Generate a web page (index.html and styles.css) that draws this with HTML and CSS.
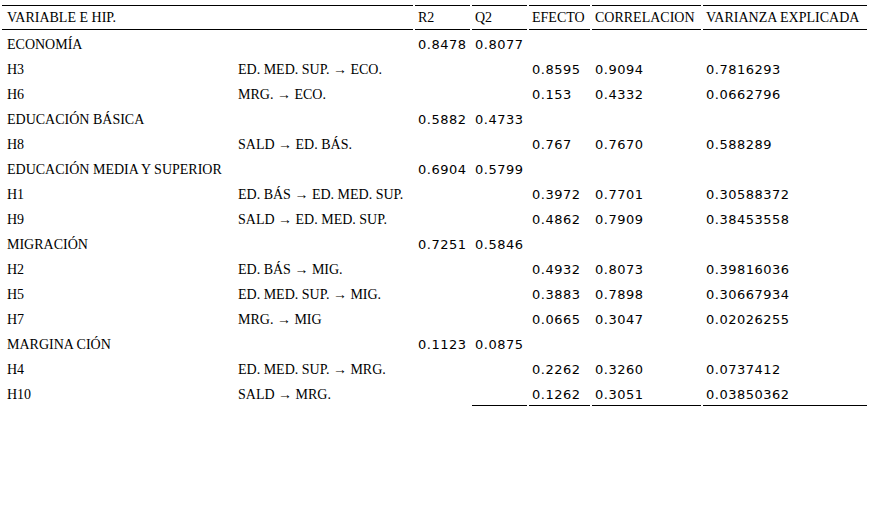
FILE: index.html
```html
<!DOCTYPE html>
<html lang="es">
<head>
<meta charset="utf-8">
<title>Tabla</title>
<link rel="stylesheet" href="styles.css">
</head>
<body>
<table class="tbl">
  <colgroup>
    <col class="c-var"><col class="c-rel"><col class="c-r2"><col class="c-q2"><col class="c-ef"><col class="c-co"><col class="c-va">
  </colgroup>
  <thead>
    <tr>
      <th colspan="2" class="first">VARIABLE E HIP.</th>
      <th>R2</th><th>Q2</th><th>EFECTO</th><th>CORRELACION</th><th>VARIANZA EXPLICADA</th>
    </tr>
  </thead>
  <tbody>
    <tr><td class="first">ECONOMÍA</td><td></td><td class="num">0.8478</td><td class="num">0.8077</td><td></td><td></td><td></td></tr>
    <tr><td class="first">H3</td><td>ED. MED. SUP. → ECO.</td><td></td><td></td><td class="num">0.8595</td><td class="num">0.9094</td><td class="num">0.7816293</td></tr>
    <tr><td class="first">H6</td><td>MRG. → ECO.</td><td></td><td></td><td class="num">0.153</td><td class="num">0.4332</td><td class="num">0.0662796</td></tr>
    <tr><td class="first">EDUCACIÓN BÁSICA</td><td></td><td class="num">0.5882</td><td class="num">0.4733</td><td></td><td></td><td></td></tr>
    <tr><td class="first">H8</td><td>SALD → ED. BÁS.</td><td></td><td></td><td class="num">0.767</td><td class="num">0.7670</td><td class="num">0.588289</td></tr>
    <tr><td class="first">EDUCACIÓN MEDIA Y SUPERIOR</td><td></td><td class="num">0.6904</td><td class="num">0.5799</td><td></td><td></td><td></td></tr>
    <tr><td class="first">H1</td><td>ED. BÁS → ED. MED. SUP.</td><td></td><td></td><td class="num">0.3972</td><td class="num">0.7701</td><td class="num">0.30588372</td></tr>
    <tr><td class="first">H9</td><td>SALD → ED. MED. SUP.</td><td></td><td></td><td class="num">0.4862</td><td class="num">0.7909</td><td class="num">0.38453558</td></tr>
    <tr><td class="first">MIGRACIÓN</td><td></td><td class="num">0.7251</td><td class="num">0.5846</td><td></td><td></td><td></td></tr>
    <tr><td class="first">H2</td><td>ED. BÁS → MIG.</td><td></td><td></td><td class="num">0.4932</td><td class="num">0.8073</td><td class="num">0.39816036</td></tr>
    <tr><td class="first">H5</td><td>ED. MED. SUP. → MIG.</td><td></td><td></td><td class="num">0.3883</td><td class="num">0.7898</td><td class="num">0.30667934</td></tr>
    <tr><td class="first">H7</td><td>MRG. → MIG</td><td></td><td></td><td class="num">0.0665</td><td class="num">0.3047</td><td class="num">0.02026255</td></tr>
    <tr><td class="first">MARGINA CIÓN</td><td></td><td class="num">0.1123</td><td class="num">0.0875</td><td></td><td></td><td></td></tr>
    <tr><td class="first">H4</td><td>ED. MED. SUP. → MRG.</td><td></td><td></td><td class="num">0.2262</td><td class="num">0.3260</td><td class="num">0.0737412</td></tr>
    <tr class="last"><td class="first">H10</td><td>SALD → MRG.</td><td></td><td class="rule"></td><td class="num rule">0.1262</td><td class="num rule">0.3051</td><td class="num rule">0.03850362</td></tr>
  </tbody>
</table>
</body>
</html>
```

FILE: styles.css
```css
html, body {
  margin: 0;
  padding: 0;
  background: #ffffff;
}

body {
  color: #000000;
  font-family: "Liberation Serif", "Times New Roman", serif;
  font-size: 14px;
}

.tbl {
  margin-top: 5px;
  border-collapse: separate;
  border-spacing: 2px 0;
  table-layout: fixed;
  width: 869px;
}

.c-var { width: 231px; }
.c-rel { width: 178px; }
.c-r2 { width: 55px; }
.c-q2 { width: 55px; }
.c-ef { width: 61px; }
.c-co { width: 109px; }
.c-va { width: 164px; }

.tbl th {
  font-weight: normal;
  text-align: left;
  white-space: nowrap;
  border-top: 1px solid #000000;
  border-bottom: 1px solid #000000;
  height: 23px;
  padding: 0 0 0 3px;
  line-height: 23px;
  vertical-align: middle;
}

.tbl td {
  text-align: left;
  white-space: nowrap;
  height: 25px;
  padding: 4px 0 0 3px;
  line-height: 21px;
  box-sizing: border-box;
  vertical-align: top;
}

.tbl .first {
  padding-left: 5px;
}

.tbl .num {
  font-family: "DejaVu Sans", Verdana, sans-serif;
  font-size: 13px;
  letter-spacing: 0.5px;
}

.tbl td.rule {
  border-bottom: 1px solid #000000;
}
```
